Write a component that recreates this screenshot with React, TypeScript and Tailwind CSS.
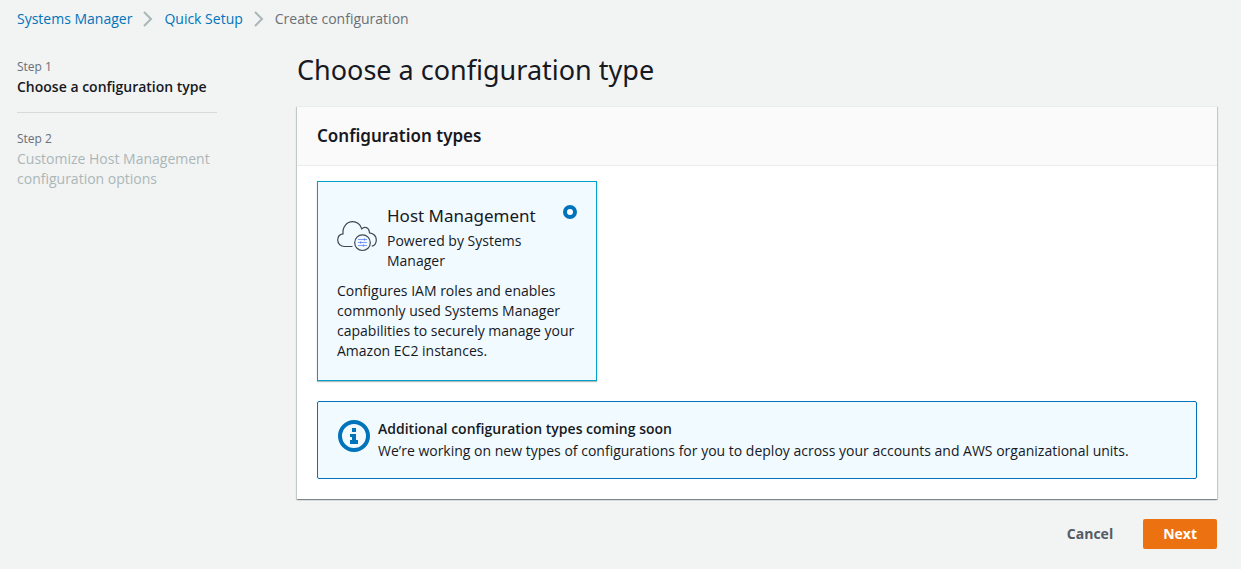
function Chevron() {
  return (
    <svg width="10" height="16" viewBox="0 0 10 16" fill="none" stroke="#aab7b8" strokeWidth="2" aria-hidden="true">
      <path d="M1 1l7 7-7 7" />
    </svg>
  );
}

function CloudSettingsIcon() {
  return (
    <svg className="shrink-0" width="40" height="40" viewBox="0 0 40 40" fill="none" aria-hidden="true">
      <path
        d="M15.500 29.500H7.500C3.500 29.500 .7 26.700 .7 23c0-3.500 2.300-5.800 5.300-6.200C5.300 9.500 10 4.700 15.500 4.700c4.500 0 7.800 2.800 9.300 7.200 1.300-1.500 3-1.800 4.500-1.300 2.200.7 3 2.900 3.200 5.200 4.200.7 6.800 3.500 6.800 7.100 0 3-1.800 5.500-4.500 6.300"
        stroke="#3d4852"
        strokeWidth="1.200"
      />
      <circle cx="25.500" cy="25.700" r="7.800" fill="#f1faff" stroke="#3d4852" strokeWidth="1.200" />
      <path d="M21 22.500h9M21 25.500h9M21 28.500h9" stroke="#7d9bff" strokeWidth="1.200" />
      <path d="M27.500 21.400v2.200M23.700 24.400v2.200M26.500 27.400v2.200" stroke="#5f82fa" strokeWidth="1.200" />
    </svg>
  );
}

function InfoIcon() {
  return (
    <svg className="mt-[2px] shrink-0" width="32" height="32" viewBox="0 0 32 32" fill="none" aria-hidden="true">
      <circle cx="16" cy="16" r="14" stroke="#0073bb" strokeWidth="4" />
      <path d="M14 8h4v4h-4zM12 14h6v6h2v4h-8v-4h2v-3h-2z" fill="#0073bb" />
    </svg>
  );
}

const link = "text-[#0073bb] hover:underline";
const heading = "font-['Noto_Sans','Open_Sans',sans-serif]";

export default function App() {
  return (
    <div className="min-h-screen bg-[#f2f3f3] pt-[9px] pr-6 pb-5 pl-[17px] font-['Open_Sans','Noto_Sans',sans-serif] text-sm leading-5 text-[#16191f]">
      <nav aria-label="Breadcrumbs">
        <ol className="flex items-center gap-[11px]">
          <li><a href="#systems-manager" className={link}>Systems Manager</a></li>
          <li><Chevron /></li>
          <li><a href="#quick-setup" className={link}>Quick Setup</a></li>
          <li><Chevron /></li>
          <li className="text-[#687078]" aria-current="page">Create configuration</li>
        </ol>
      </nav>

      <div className="mt-[22px] flex gap-20">
        <ol className="w-[200px] shrink-0 pt-[6px]">
          <li className="border-b border-[#d5dbdb] pb-[15px]">
            <div className="text-xs leading-5 text-[#687078]">Step 1</div>
            <div className="font-semibold" aria-current="step">Choose a configuration type</div>
          </li>
          <li className="pt-4 text-[#aab7b8]">
            <div className="text-xs leading-5 text-[#687078]">Step 2</div>
            <div>Customize Host Management configuration options</div>
          </li>
        </ol>

        <main className="min-w-0 flex-1">
          <h1 className={`text-[27px] leading-[38px] ${heading}`}>Choose a configuration type</h1>

          <section className="mt-[17px] border-t border-[#eaeded] bg-white shadow-[0_1px_1px_0_rgba(0,28,36,0.3),1px_1px_1px_0_rgba(0,28,36,0.15),-1px_1px_1px_0_rgba(0,28,36,0.15)]">
            <header className="border-b border-[#eaeded] bg-[#fafafa] px-5 py-[15px]">
              <h2 className={`text-[17px] leading-7 font-semibold ${heading}`}>Configuration types</h2>
            </header>
            <div className="px-5 pt-[15px] pb-5">
              <label className="block w-[280px] border border-[#00a1c9] bg-[#f1faff] px-[19px] pt-5 pb-[19px] shadow-[0_1px_1px_0_rgba(0,28,36,0.3)]">
                <span className="flex">
                  <span className="flex flex-1 items-center gap-[10px]">
                    <CloudSettingsIcon />
                    <span className="flex-1">
                      <span className={`block text-[17px] leading-7 ${heading}`}>Host Management</span>
                      <span className="block w-[150px] pt-px">Powered by Systems Manager</span>
                    </span>
                  </span>
                  <input
                    type="radio"
                    name="configuration-type"
                    defaultChecked
                    aria-label="Host Management"
                    className="mt-[3px] h-[14px] w-[14px] appearance-none rounded-full border-[#0073bb] bg-white checked:border-4"
                  />
                </span>
                <span className="mt-[10px] block">
                  Configures IAM roles and enables commonly used Systems Manager capabilities to securely manage your Amazon EC2 instances.
                </span>
              </label>

              <div className="mt-5 flex gap-2 rounded-[2px] border border-[#0073bb] bg-[#f1faff] px-5 py-4">
                <InfoIcon />
                <div className="leading-[22px]">
                  <div className="font-semibold">Additional configuration types coming soon</div>
                  <div>We’re working on new types of configurations for you to deploy across your accounts and AWS organizational units.</div>
                </div>
              </div>
            </div>
          </section>

          <div className="mt-5 flex justify-end gap-[10px] font-bold">
            <button type="button" className="rounded-[2px] px-5 py-[5px] text-[#545b64]">Cancel</button>
            <button type="button" className="rounded-[2px] bg-[#ec7211] px-5 py-[5px] text-white">Next</button>
          </div>
        </main>
      </div>
    </div>
  );
}
